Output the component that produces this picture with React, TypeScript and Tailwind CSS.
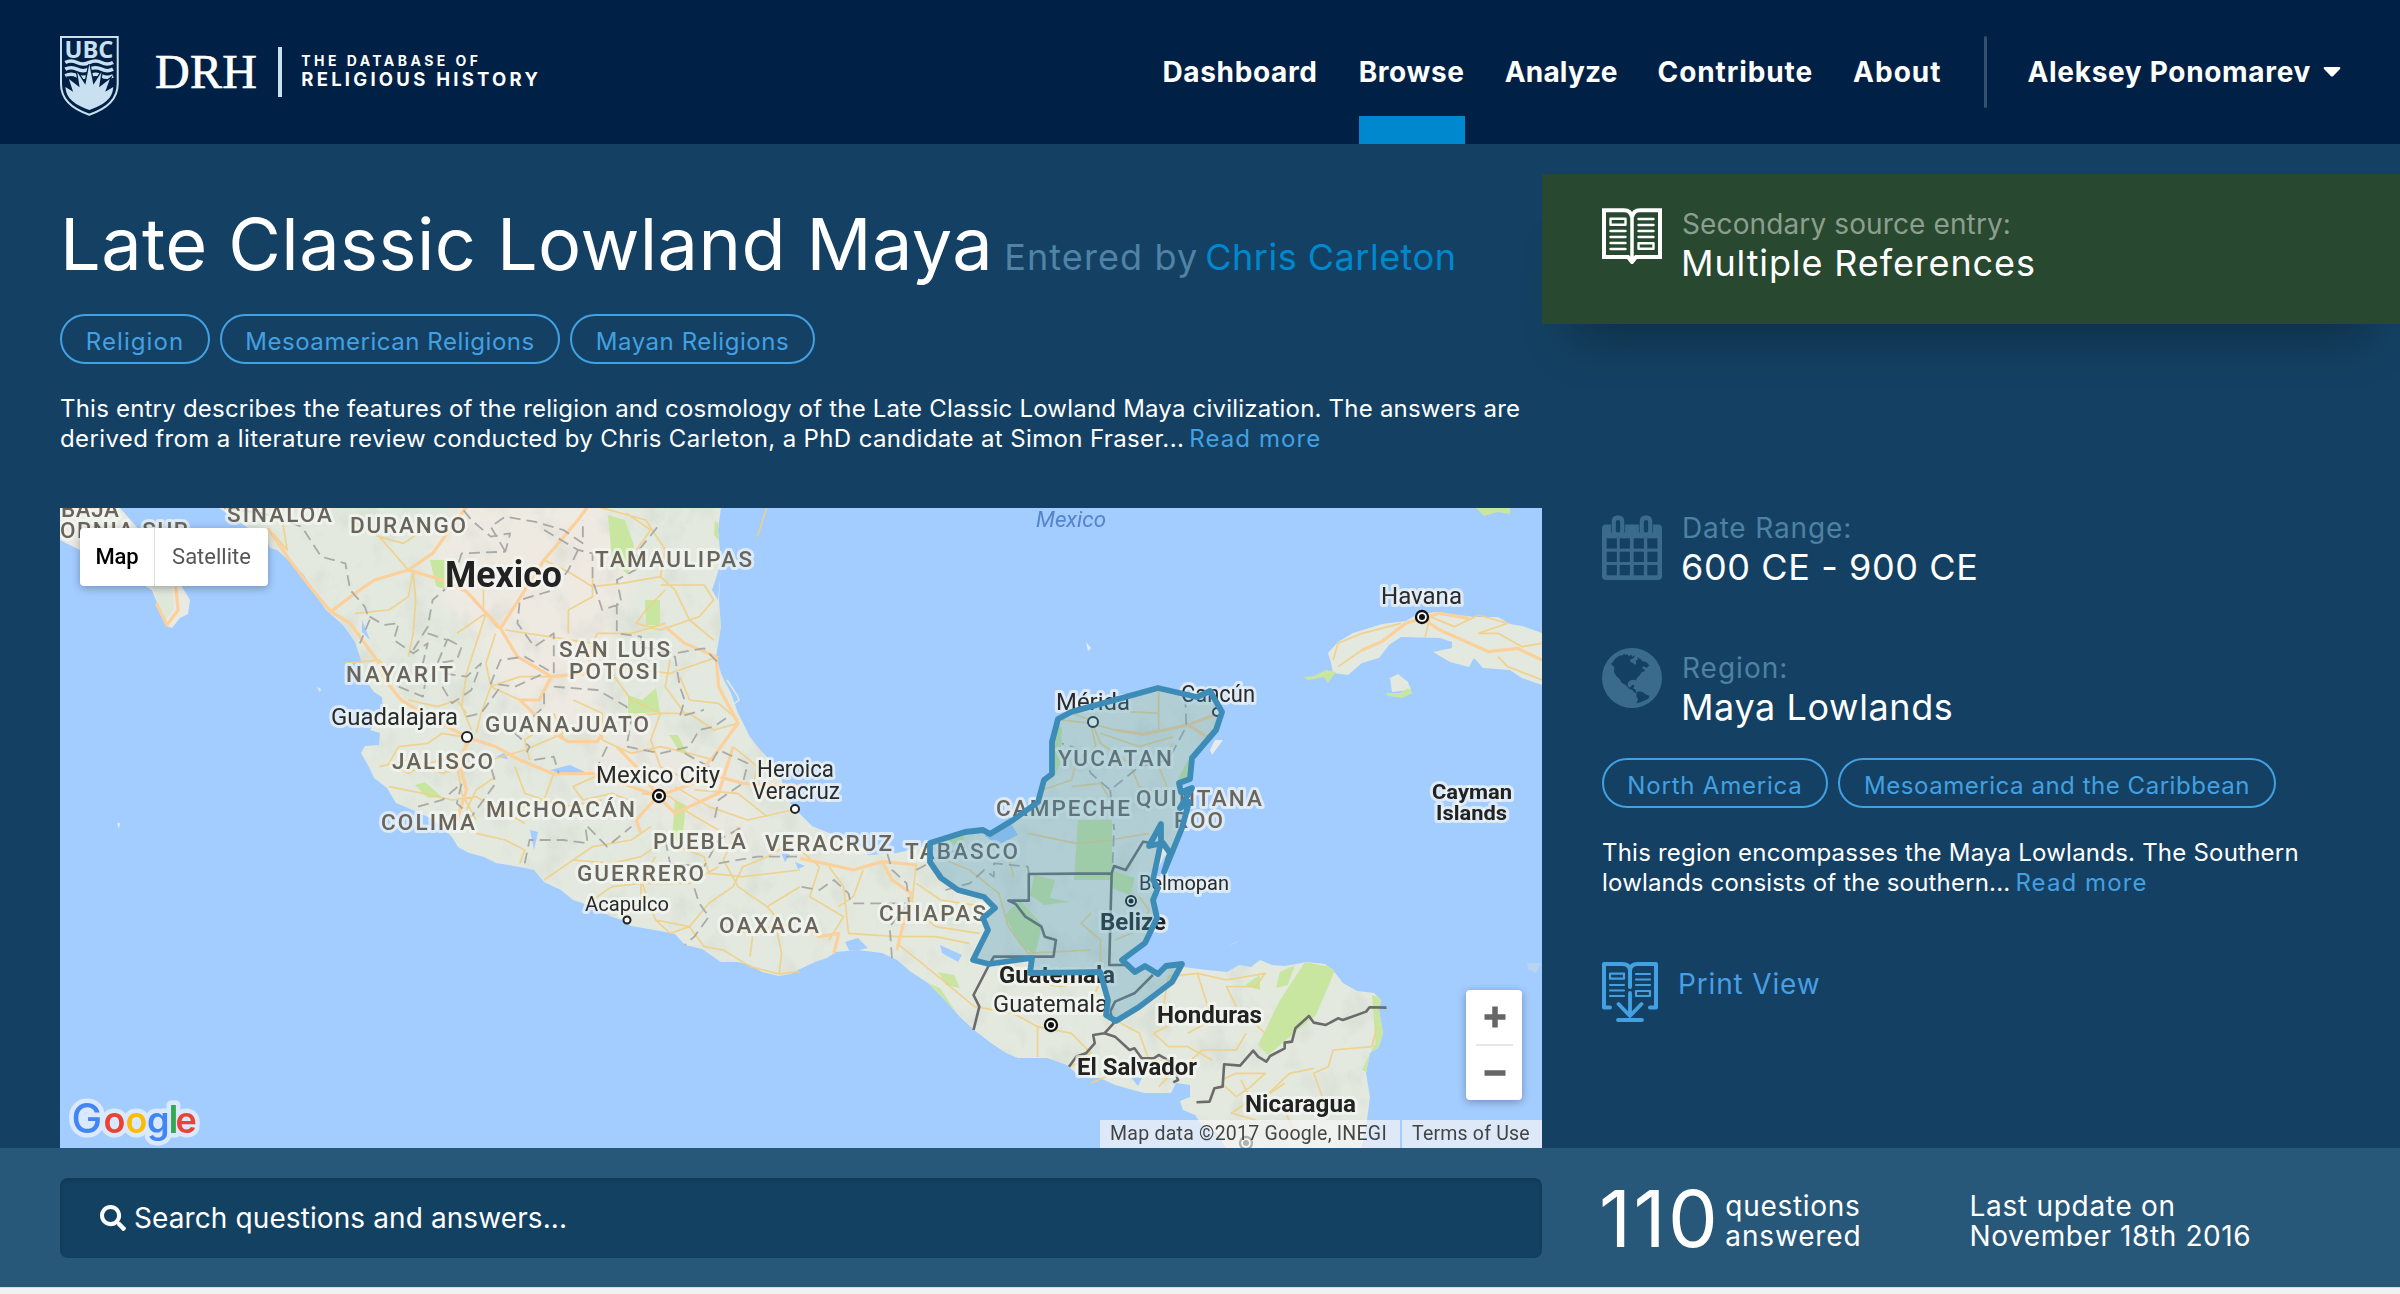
import React from "react";
import { FaSearch } from "react-icons/fa";

function Crest() {
  return (
    <svg className="block h-20 w-[59px]" viewBox="60 36 59 80" fill="none">
      <path d="M61 37H117.7V84C117.7 100 106 109 89.3 114.7C72.5 109 61 100 61 84Z" stroke="#c9e0f1" strokeWidth="2" />
      <text x="64.5" y="57.5" fontFamily="Open Sans" fontWeight="700" fontSize="23" textLength="49" lengthAdjust="spacingAndGlyphs" fill="#c9e0f1">UBC</text>
      <g stroke="#c9e0f1" strokeWidth="3.6">
        <path d="M65.3 62.5Q71 59.5 77 62.5T89.3 62.5T101.5 62.5T113 62.5" />
        <path d="M65.3 69.2Q71 66.2 77 69.2T89.3 69.2T101.5 69.2T113 69.2" />
        <path d="M65.3 75.8Q71 72.8 77 75.8T89.3 75.8T101.5 75.8T113 75.8" />
      </g>
      <g transform="scale(.3827 .3333)" fill="#c9e0f1" stroke="#002145" strokeWidth="7" paintOrder="stroke">
        <path d="M171 261L191 275L180 237L208 262L202 217L223 254L233.500 193L244 254L265 217L259 262L287 237L275 275L296 261C294 290 282 310 233.500 330C186 310 173 290 171 261Z" />
      </g>
    </svg>
  );
}

function BookIcon() {
  return (
    <svg className="block h-14 w-[60px] shrink-0" viewBox="0 0 60 56" fill="none" stroke="#fff">
      <path d="M30 9C29 4 26 2.200 22 2.200H2V49H26L30 54L34 49H58V2.200H38C34 2.200 31 4 30 9Z" strokeWidth="4" />
      <path d="M24 48.500H36L30 56Z" fill="#fff" strokeWidth="0" />
      <path d="M30 6V50" strokeWidth="3.500" />
      <path d="M8.500 10.700H23.500V16.700H8.500ZM36.500 35.300H51.500V40.700H36.500Z" strokeWidth="2.400" strokeLinejoin="round" />
      <path d="M8.500 23H23.500M8.500 29H23.500M8.500 35H23.500M8.500 41H23.500M36.500 11H51.500M36.500 17H51.500M36.500 23H51.500M36.500 29H51.500" strokeWidth="2.400" strokeLinecap="round" />
    </svg>
  );
}

function PrintIcon() {
  return (
    <svg className="block h-[60px] w-14 shrink-0" viewBox="0 0 56 60" fill="none" stroke="#43a0e2" strokeLinecap="round" strokeLinejoin="round">
      <path d="M8 45.500H2V2H20C24.500 2 28 4 28 9V25M28 9C28 4 31.500 2 36 2H54V45.500H48" strokeWidth="4" />
      <path d="M28 31V53M16.500 42L28 54L39.500 42M16 58H40" strokeWidth="3.800" />
      <path d="M8 11.700H22V16.700H8ZM34 29H48V34H34Z" strokeWidth="2.200" />
      <path d="M8 23H22M8 28.500H22M8 34H22M34 12H48M34 17.500H48M34 23H48" strokeWidth="2.200" />
    </svg>
  );
}

function CalendarIcon() {
  const cols = [4.700, 17.700, 31.700, 45.300];
  const rows = [23.300, 36.700, 50];
  return (
    <svg className="block h-[65px] w-[60px] shrink-0" viewBox="0 0 60 65">
      <rect y="9.500" width="60" height="55.500" rx="4" fill="#3a6b8c" />
      <g fill="#3a6b8c" stroke="#144163" strokeWidth=".8">
        <rect x="9.300" y="0" width="13.400" height="22" rx="6" />
        <rect x="37.300" y="0" width="13.400" height="22" rx="6" />
      </g>
      <rect x="6" y="17.500" width="48" height="5" fill="#3a6b8c" />
      <rect x="13.800" y="5" width="4.400" height="12.500" rx="2" fill="#144163" />
      <rect x="41.800" y="5" width="4.400" height="12.500" rx="2" fill="#144163" />
      {rows.map((y) => cols.map((x) => <rect key={`${x}-${y}`} x={x} y={y} width="10.200" height="10.300" fill="#144163" />))}
    </svg>
  );
}

function GlobeIcon() {
  return (
    <svg className="block size-[60px] shrink-0" viewBox="0 0 180 180">
      <circle cx="90" cy="90" r="90" fill="#3a6b8c" />
      <path
        fill="#144163"
        d="M27 48L34 40L41 31L52 23L62 22L66 17L70 21L76 19L80 25L88 20L92 26L99 22L96 30L86 34L84 41L92 44L99 50L103 48L101 38L108 34L106 27L115 33L122 40L133 42L142 52L134 60L126 55L119 60L127 64L128 70L119 73L112 83L104 91L103 98L97 95L86 97L78 103L77 113L83 119L91 111L97 111L94 122L101 125L103 136L96 133L92 127L81 122L70 110L60 105L52 92L42 83L36 72L37 58ZM104 133L112 130L122 132L130 139L143 144L139 152L126 158L116 163L103 166L108 153L103 145Z"
      />
    </svg>
  );
}

const LAND =
  "M219 500L219 508L234 518L248 528L267 540L270 548L277 550L292 563L304 575L311 588L326 610L343 625L355 642L361 660L362 675L374 692L382 697L383 713L370 730L380 733L379 745L365 746L361 753L369 767L374 778L387 788L396 803L408 808L428 817L442 827L452 837L458 847L469 853L484 857L496 863L520 867L534 870L544 882L561 890L573 900L588 905L612 917L622 920L631 926L660 931L675 934L685 945L702 949L721 962L738 962L750 965L762 972L779 976L791 974L800 969L815 962L827 958L836 952L858 950L882 953L897 960L911 972L928 983L945 1000L960 1017L974 1030L991 1043L1006 1053L1018 1058L1047 1058L1067 1065L1079 1076L1100 1078L1115 1085L1144 1093L1171 1093L1176 1083L1190 1085L1190 1097L1180 1101L1183 1110L1195 1115L1202 1125L1217 1133L1227 1150L1361 1150L1367 1120L1370 1097L1366 1073L1370 1053L1379 1047L1383 1033L1379 1010L1381 1000L1374 993L1357 991L1343 983L1333 970L1325 964L1307 962L1285 966L1272 965L1260 960L1251 967L1239 965L1227 972L1207 970L1183 967L1166 965L1159 973L1144 967L1134 970L1122 960L1144 943L1156 917L1153 897L1159 887L1156 873L1164 857L1172 850L1180 833L1188 807L1190 793L1178 783L1190 777L1192 758L1216 730L1222 712L1210 691L1197 698L1158 690L1120 700L1071 714L1058 720L1054 742L1052 775L1042 787L1038 802L1014 822L1000 830L989 835L975 832L965 834L930 845L897 853L868 855L863 848L846 838L829 833L812 826L800 814L790 803L784 787L777 767L767 757L757 746L750 737L738 713L731 693L724 680L721 673L716 657L721 627L719 600L721 560L718 530L722 500Z";

const THIN_NW =
  "M640 60L700 110L750 130L820 60M700 110L760 210M770 215L775 300L770 400L760 470M650 340L720 330L760 290L770 215M880 275L920 340L860 400M920 340L880 520L870 620L890 690M915 240L915 330L945 385M1040 180L1090 215L1140 260L1200 250L1280 230M1090 400L1090 330L1140 290L1140 230M1150 20L1250 60L1290 150L1280 230L1310 270L1340 360L1390 420M1280 255L1370 255L1390 300L1360 350L1280 390L1230 370L1250 330L1290 270M1230 150L1260 90L1210 40M940 400L920 490L930 560L990 600M960 390L1050 410L1140 430L1150 400L1220 400L1290 370M1140 430L1170 500L1220 600L1280 640L1340 640L1390 690L1440 670M1060 530L990 530L930 560L910 640L900 700M1180 500L1300 520L1400 470M1320 530L1340 600L1400 610L1440 660M1300 480L1290 560L1330 640M760 600L820 620L860 600L880 640M740 740L800 730L830 700L870 710M740 740L720 790L760 820L800 790L860 770M890 715L860 790L870 880L900 960M930 780L1000 750L1080 700L1060 640M980 800L1000 880L1080 920L1160 900M1060 820L1040 900L980 930M1160 720L1160 640L1100 600M1160 720L1220 760L1280 740L1340 760L1390 780M1210 650L1280 640L1260 720L1280 800L1350 850M1310 860L1380 920L1460 960L1550 930M1350 870L1440 880L1500 950M1430 740L1480 800L1470 860L1520 900M720 860L790 880L850 900L900 890L1000 970M940 830L900 870L880 930M1080 710L1040 680L1000 720L1010 780M1480 110L1500 20M480 100L510 150L500 60M630 490L700 480L720 520M700 800L760 780L830 820L880 800M1160 820L1100 860L1120 900L1180 880L1230 910M1240 880L1300 890L1340 940L1400 990";
const THICK_NW =
  "M470 85L520 190L560 265L600 335L640 370L670 430L700 490L715 545L745 600L800 650L880 710L940 740L990 780L1060 822L1140 820L1200 850L1275 888L1350 850L1400 830L1450 850L1568 860M600 335L650 280L690 240L760 210L810 160L850 80L880 20M760 210L830 240L880 275L950 385L985 470L1055 530L1030 600L990 600L1060 700L1090 725L1150 725L1160 700M950 385L1040 180L1110 60L1130 20M1055 530L1130 520L1140 430M1190 740L1230 800L1275 888M1275 888L1310 940L1400 880L1430 740M1395 470L1400 560L1440 670L1390 770L1350 830M1395 470L1330 430L1290 380M1275 888L1230 960L1240 1000M860 960L880 870L865 790L885 710M280 260L285 330L262 375L240 310";
const THIN_SW =
  "M900 40L960 60L1000 90L990 130M1040 180L1100 120L1140 80L1220 60L1260 20M1100 120L1180 130L1240 110L1290 60M1130 250L1180 200L1240 190L1340 190L1400 140M1240 190L1240 250L1200 280M1270 110L1240 180L1270 300L1340 320L1380 250L1430 200L1450 140L1500 110L1560 60M1440 20L1410 120L1440 200L1500 260L1530 310L1470 340L1420 330M1500 260L1568 200M1530 310L1568 340M1470 350L1465 410M1520 330L1530 400L1525 460M1340 320L1370 380L1410 390L1465 440L1525 462L1568 455M1270 300L1300 340L1340 320M1320 80L1370 110L1380 160L1450 170L1568 150";
const THIN_SE =
  "M0 90L40 140L20 230L90 290L60 360M90 200L100 340L200 350L280 350L350 370M90 200L60 140M130 150L110 230L80 260M240 130L230 260L280 320L370 340M240 190L290 240L380 260M200 370L260 440L310 500L360 560M400 420L440 480L540 500L600 470M360 560L440 580L490 620L490 710M490 620L560 640L600 700L560 740M300 120L350 150L410 220L430 320L470 400L600 390M430 100L440 170M470 40L570 70L640 60L720 40M600 280L580 310L620 360L620 440M650 360L700 330L720 270L700 230M640 590L600 550L620 480M650 600L700 640L720 720L800 730L830 690L900 690L920 640M760 470L750 560L770 610L730 640L760 680L800 680L850 720M760 470L820 460L880 480L960 460L940 500L880 500L900 560L960 640M820 460L850 600L800 640M870 780L900 760L960 760L930 800L900 830L870 790M910 780L930 840L890 880L940 900M930 840L1000 870L1080 840L1060 760L1090 740L1100 690L1180 680M1000 870L1020 940M600 790L680 740L760 770L740 800M1000 790L960 830L1010 760L1060 745M1180 680L1190 620";
const THICK_SE =
  "M0 115L50 130L110 150L170 125L240 135M170 125L190 180L230 220L210 330L200 390M70 400L80 340L40 350L20 330";
const THIN_NE =
  "M1100 480L1110 430L1160 400L1240 370M1290 410L1300 350L1350 380L1400 345L1460 370L1400 400L1440 400L1490 440L1531 430M1440 470L1460 500L1531 540M1110 500L1160 450M540 660L600 670L650 690M560 640L600 660L620 730L680 790L700 860L740 880M600 670L610 740L570 790L560 840L500 870L490 940M740 570L740 690L710 700M620 630L740 640M620 700L700 740L770 710M770 730L740 800L760 870L740 910M560 860L620 850L640 900";
const THICK_NE = "M1160 450L1200 425L1250 370L1283 355L1320 390L1420 455L1480 445L1531 480M1283 355L1320 340L1380 355M650 690L710 703L800 675L855 645M800 675L840 710";
const DASH_NW =
  "M380 24L460 40L540 80L580 170L630 190L640 270L670 320L680 360L660 430M680 350L710 375L740 370L730 420L770 460L800 430L790 490M800 400L840 420L820 490L860 480L870 440L830 410M770 450L800 380L810 300L850 250L870 160L960 155L970 100L930 110L890 60L870 24M960 155L930 80L960 50L1020 65L1080 90L1120 130L1120 60M1040 90L1110 150L1140 160L1140 240L1160 330L1200 310L1190 240L1240 200L1230 160L1280 70M1110 150L1090 210L1060 270L990 300L985 370L1020 440L1060 400L1060 520L1000 470L950 480L930 550L980 560L1040 520M1190 310L1190 400L1240 410L1240 440L1310 460L1370 445L1400 490M1240 440L1310 470L1320 560L1330 600L1320 650L1370 630M1060 560L1150 570L1210 620L1220 660L1210 740L1280 760L1340 740L1360 690L1390 680L1420 650M830 560L850 610L890 570L910 490L880 530L830 520M880 650L910 640L950 560M1040 580L1040 620L980 700L1010 740L1000 770M1020 780L1060 770L1070 820M740 560L790 590L800 500M1330 760L1380 800L1400 750L1460 790L1450 850L1400 900L1390 970M1170 740L1150 800M780 920L830 900L870 850L860 910L890 950L940 850L930 800";
const DASH_SW =
  "M1000 130L1010 60L1080 60L1130 70L1125 20M1130 20L1170 80L1220 20M1290 60L1300 130L1370 140L1400 60L1450 20M1400 130L1480 110L1568 110M1350 205L1360 250L1380 290L1350 350L1330 375";
const DASH_SE =
  "M180 100L190 150L220 190L225 250L105 250L100 220L70 180L40 210L0 200M225 250L185 320L190 420M300 210L350 190L380 150L400 170L400 130L470 140L472 160M240 150L290 110L340 80M645 130L648 20";
const DASH_NE = "M795 590L797 680L760 780L700 800L640 870L600 820L580 750L540 730M640 870L648 990";
const BORDERS_SE =
  "M358 630L370 560L358 525L390 435L400 410L523 410L528 360L505 350L498 320L465 290L445 252L430 242L472 242L472 162L643 160L648 138L672 150L708 65L722 68M643 160L638 435L670 435M728 465L690 520L650 545L640 575L647 610L628 640L605 645L608 670L590 700L570 710L555 740M628 640L650 650L680 690L690 685L705 715L730 715L740 705L765 725L780 780L770 787M818 847L845 845L855 805L872 800L875 733L908 737L935 692L945 710L962 725L970 708L1000 685L1000 668L1015 665L1022 625L1050 588L1060 608L1085 615L1110 595L1120 600L1168 575L1175 562L1210 563";
const REGION =
  "M1158 688L1197 697L1210 691L1222 712L1216 730L1192 758L1190 779L1179 783L1181 792L1192 788L1180 808L1189 802L1182 828L1164 872L1170 853L1163 843L1149 846L1161 824L1161 842L1153 880L1158 888L1153 900L1157 918L1145 943L1122 960L1135 972L1145 966L1158 974L1166 966L1182 964L1172 982L1139 1007L1116 1021L1106 1015L1108 1000L1100 972L1030 973L1032 958L989 964L973 960L988 930L983 918L995 908L984 897L958 890L941 878L930 862L930 843L965 832L983 830L990 834L1013 820L1038 802L1044 780L1052 774L1052 742L1058 719L1071 712Z";

type MapLabel = { t: string; x: number; y: number; w: number; kind: "state" | "city" | "country"; s?: number };
const LABELS: MapLabel[] = [
  { t: "BAJA", x: 61, y: 517, w: 58, kind: "state" },
  { t: "ORNIA SUR", x: 60, y: 538, w: 128, kind: "state" },
  { t: "SINALOA", x: 227, y: 522, w: 105, kind: "state" },
  { t: "DURANGO", x: 350, y: 533, w: 116, kind: "state" },
  { t: "TAMAULIPAS", x: 595, y: 567, w: 157, kind: "state" },
  { t: "SAN LUIS", x: 559, y: 657, w: 111, kind: "state" },
  { t: "POTOSI", x: 569, y: 679, w: 89, kind: "state" },
  { t: "NAYARIT", x: 346, y: 682, w: 107, kind: "state" },
  { t: "GUANAJUATO", x: 485, y: 732, w: 164, kind: "state" },
  { t: "JALISCO", x: 392, y: 769, w: 101, kind: "state" },
  { t: "MICHOACÁN", x: 486, y: 817, w: 149, kind: "state" },
  { t: "COLIMA", x: 381, y: 830, w: 94, kind: "state" },
  { t: "PUEBLA", x: 653, y: 849, w: 93, kind: "state" },
  { t: "VERACRUZ", x: 765, y: 851, w: 127, kind: "state" },
  { t: "GUERRERO", x: 577, y: 881, w: 127, kind: "state" },
  { t: "OAXACA", x: 719, y: 933, w: 100, kind: "state" },
  { t: "CHIAPAS", x: 879, y: 921, w: 107, kind: "state" },
  { t: "TABASCO", x: 905, y: 859, w: 113, kind: "state" },
  { t: "YUCATAN", x: 1058, y: 766, w: 114, kind: "state" },
  { t: "CAMPECHE", x: 996, y: 816, w: 134, kind: "state" },
  { t: "QUINTANA", x: 1136, y: 806, w: 126, kind: "state" },
  { t: "ROO", x: 1174, y: 828, w: 49, kind: "state" },
  { t: "Guadalajara", x: 331, y: 725, w: 127, kind: "city" },
  { t: "Mexico City", x: 596, y: 783, w: 124, kind: "city" },
  { t: "Heroica", x: 757, y: 777, w: 77, kind: "city" },
  { t: "Veracruz", x: 752, y: 799, w: 88, kind: "city" },
  { t: "Acapulco", x: 585, y: 911, w: 84, kind: "city", s: 20 },
  { t: "Mérida", x: 1056, y: 710, w: 74, kind: "city" },
  { t: "Cancún", x: 1181, y: 702, w: 74, kind: "city" },
  { t: "Havana", x: 1381, y: 604, w: 81, kind: "city" },
  { t: "Belmopan", x: 1139, y: 890, w: 90, kind: "city", s: 20 },
  { t: "Guatemala", x: 993, y: 1012, w: 115, kind: "city" },
  { t: "Mexico", x: 445, y: 587, w: 117, kind: "country", s: 36 },
  { t: "Guatemala", x: 999, y: 983, w: 116, kind: "country" },
  { t: "Belize", x: 1100, y: 930, w: 66, kind: "country" },
  { t: "Honduras", x: 1157, y: 1023, w: 105, kind: "country" },
  { t: "El Salvador", x: 1077, y: 1075, w: 120, kind: "country" },
  { t: "Nicaragua", x: 1245, y: 1112, w: 111, kind: "country" },
  { t: "Cayman", x: 1432, y: 799, w: 80, kind: "country", s: 21 },
  { t: "Islands", x: 1436, y: 820, w: 71, kind: "country", s: 21 },
];

const labelStyle = {
  state: { fill: "#6a655b", weight: 500, size: 22.5 },
  city: { fill: "#2a2a2a", weight: 400, size: 23 },
  country: { fill: "#222", weight: 700, size: 23 },
};

function Capital({ x, y, r = 6 }: { x: number; y: number; r?: number }) {
  return (
    <>
      <circle cx={x} cy={y} r={r} fill="#fff" stroke="#111" strokeWidth={r / 2.6} />
      <circle cx={x} cy={y} r={r / 2} fill="#111" />
    </>
  );
}

const NW = "translate(40 500) scale(.4847 .3333)";
const SW = "translate(40 820) scale(.4847 .3333)";
const NE = "translate(800 500) scale(.4847 .3333)";
const SE = "translate(800 820) scale(.4847 .3333)";

function Lines({ d, at }: { d: string; at: string }) {
  return <path d={d} transform={at} vectorEffect="non-scaling-stroke" />;
}

function MapDrawing() {
  return (
    <svg className="block size-full" viewBox="60 508 1482 640" fill="none">
      <defs>
        <clipPath id="land">
          <path d={LAND} />
        </clipPath>
        <filter id="relief" x="0" y="0" width="1" height="1">
          <feTurbulence type="fractalNoise" baseFrequency=".035 .028" numOctaves="4" seed="7" />
          <feColorMatrix values="0 0 0 0 .62  0 0 0 0 .66  0 0 0 0 .58  0 2.600 0 0 -1.350" />
        </filter>
        <filter id="soft" x="-.2" y="-.2" width="1.400" height="1.400">
          <feGaussianBlur stdDeviation="9" />
        </filter>
      </defs>
      <rect x="60" y="508" width="1482" height="640" fill="#a3ccff" />
      <path d={LAND} fill="#e3e9df" />
      <g clipPath="url(#land)">
        <g fill="#eeeae2" filter="url(#soft)">
          <path d="M470 500H600L640 560L610 640L590 720L550 740L500 690L480 640L440 600L430 540Z" />
          <path d="M590 700L680 740L740 780L760 850L720 860L640 800L590 780Z" opacity=".6" />
        </g>
        <rect x="219" y="500" width="1200" height="650" filter="url(#relief)" opacity=".5" />
        <g fill="#c9e6a0">
          <path d="M608 515L625 520L634 545L628 575L612 560Z" />
          <path d="M430 560H446V590L436 586Z" />
          <path d="M645 600H660V625H646Z" />
          <path d="M628 695L642 700L656 688L660 712L628 714Z" />
          <path d="M669 735L678 735L688 755L680 752Z" />
          <path d="M415 785L425 782L442 797L428 798Z" />
          <path d="M715 520L723 530V545L714 535Z" />
          <path d="M675 800L686 805L682 842L672 838Z" />
          <path d="M1078 820H1112V880H1074Z" />
          <path d="M1034 875L1055 880L1050 898L1070 902L1044 905L1030 895Z" />
          <path d="M1005 915L1020 900L1042 925L1035 955L1020 945Z" />
          <path d="M1110 870L1135 878L1130 895L1112 888Z" />
          <path d="M1188 760H1194V785L1176 783Z" />
          <path d="M1052 718L1062 728L1060 765L1052 780Z" />
          <path d="M1305 962L1336 968L1316 1015L1268 1055L1258 1045L1280 1000Z" />
          <path d="M1280 972L1295 965L1288 985L1276 988Z" />
          <path d="M1245 985L1260 975L1260 990Z" />
          <path d="M1374 1045H1382L1372 1075L1362 1070ZM1372 995L1388 1000V1050H1376Z" />
          <path d="M920 980L940 988L960 1018L945 1005Z" />
          <path d="M938 972L954 975L960 988L946 985Z" />
          <path d="M948 840L965 832L962 850Z" />
        </g>
        <g fill="#a3ccff">
          <path d="M550 770L570 765L585 772L560 774Z" />
          <path d="M530 830L538 832L534 850Z" />
          <path d="M780 850L790 855L785 862ZM795 862L805 866L798 869Z" />
          <path d="M1130 1076L1142 1078L1138 1086ZM988 826L1010 822L1018 835L998 845L985 836Z" />
          <path d="M845 942L858 938L868 948L850 952ZM940 945L962 955L958 962L942 953Z" />
          <path d="M722 560L712 590L718 600ZM362 620L370 640L362 632Z" />
          <path d="M496 757L504 753L508 759Z" />
        </g>
      </g>

      <path d="M60 508H120L135 525L150 545L165 575L182 587L190 600L188 614L180 618L172 628L166 626L160 610L152 590L135 580L110 565L80 550L60 540Z" fill="#ebeae2" />
      <path d="M152 585L172 583L174 610L164 622Z" fill="#dfe6da" />
      <path d="M1331 663L1328 653L1338 642L1353 633L1382 624L1406 621L1416 615L1435 612L1459 615L1474 617L1498 617L1510 624L1522 626L1542 633V685L1522 678L1510 670L1483 668L1474 658L1469 667L1450 662L1433 652L1452 648L1452 642L1440 638L1401 637L1389 645L1379 658L1362 663L1348 675L1333 673Z" fill="#e3e9df" />
      <path d="M1304 677L1314 676L1326 670L1336 672L1328 683L1324 677L1308 680Z" fill="#c9e6a0" />
      <path d="M1390 678L1398 674L1408 682L1411 690L1392 692Z" fill="#e3e9df" />
      <path d="M1386 693L1400 693L1408 688L1413 693L1402 698L1388 696Z" fill="#c9e6a0" />
      <path d="M1476 508H1510V514L1498 512L1484 516Z" fill="#c9e6a0" />
      <path d="M1210 750L1215 740L1223 740L1212 755ZM1086 642L1091 648L1088 651ZM1229 946L1241 940L1234 943ZM317 687L321 689L320 692ZM117 823L119 829L120 823Z" fill="#e6ecea" />
      <path d="M1527 963H1541L1536 973L1528 969Z" fill="#b9d3f2" />
      <path d="M727 680L737 695L739 700L734 704" stroke="#e3e9df" strokeWidth="1.500" />

      <g stroke="#f0cf86" strokeWidth="1.700" strokeLinejoin="round" strokeOpacity=".9">
        <Lines d={THIN_SW} at={SW} />
        <Lines d={THIN_SE} at={SE} />
        <Lines d={THIN_NE} at={NE} />
        <Lines d={THIN_NW} at={NW} />
      </g>
      <g stroke="#fbd09a" strokeWidth="3.200" strokeLinejoin="round">
        <Lines d={THICK_NW} at={NW} />
        <Lines d={THICK_SE} at={SE} />
        <Lines d={THICK_NE} at={NE} />
      </g>
      <g stroke="#a9aaa8" strokeWidth="1.800" strokeDasharray="11 6" strokeLinejoin="round">
        <Lines d={DASH_NW} at={NW} />
        <Lines d={DASH_SW} at={SW} />
        <Lines d={DASH_SE} at={SE} />
        <Lines d={DASH_NE} at={NE} />
      </g>
      <g stroke="#6b6b6b" strokeWidth="2.600" strokeLinejoin="round">
        <Lines d={BORDERS_SE} at={SE} />
      </g>

      <text x="1036" y="527" fontFamily="Roboto" fontStyle="italic" fontSize="22" textLength="70" lengthAdjust="spacingAndGlyphs" fill="#5584cc">Mexico</text>
      {LABELS.map((l) => {
        const st = labelStyle[l.kind];
        return (
          <text
            key={`${l.t}${l.x}`}
            x={l.x}
            y={l.y}
            fontFamily="Roboto"
            fontWeight={st.weight}
            fontSize={l.s ?? st.size}
            textLength={l.w}
            lengthAdjust={l.kind === "state" ? "spacing" : "spacingAndGlyphs"}
            fill={st.fill}
            stroke="#f4f6f3"
            strokeOpacity=".7"
            strokeWidth="6"
            strokeLinejoin="round"
            paintOrder="stroke"
          >
            {l.t}
          </text>
        );
      })}
      <g fill="#fff" stroke="#222" strokeWidth="2">
        <circle cx="467" cy="737" r="5" />
        <circle cx="795" cy="809" r="4" />
        <circle cx="627" cy="920" r="3.500" />
        <circle cx="1093" cy="722" r="5" />
        <circle cx="1217" cy="712" r="4" />
      </g>
      <Capital x={659} y={796} />
      <Capital x={1422} y={617} />
      <Capital x={1051} y={1025} />
      <Capital x={1131} y={901} r={5} />
      <Capital x={1246} y={1143} />

      <path d={REGION} fill="#4495bb" fillOpacity=".32" stroke="#3d8cb7" strokeWidth="5.800" strokeLinejoin="round" />

      <g fontFamily="Inter" fontWeight="600" fontSize="36">
        <text y="1132.500" fill="#dbe9ff" stroke="#dbe9ff" strokeWidth="9" strokeLinejoin="round">
          <tspan x="71.500" fontSize="41">G</tspan>
          <tspan x="103.500">o</tspan>
          <tspan x="125.500">o</tspan>
          <tspan x="147">g</tspan>
          <tspan x="168.500" fontSize="38">l</tspan>
          <tspan x="175.500">e</tspan>
        </text>
        <text y="1132.500">
          <tspan x="71.500" fontSize="41" fontWeight="500" fill="#4285f4">G</tspan>
          <tspan x="103.500" fill="#ea4335">o</tspan>
          <tspan x="125.500" fill="#fbbc05">o</tspan>
          <tspan x="147" fill="#4285f4">g</tspan>
          <tspan x="168.500" fontSize="38" fill="#34a853">l</tspan>
          <tspan x="175.500" fill="#ea4335">e</tspan>
        </text>
      </g>
    </svg>
  );
}

function Tag({ className, children }: { className: string; children: React.ReactNode }) {
  return (
    <a className={`flex h-[50px] items-center justify-center whitespace-nowrap rounded-[25px] border-2 border-[#43a0e2] pt-[5px] text-[24px] leading-[30px] text-[#43a0e2] ${className}`}>
      {children}
    </a>
  );
}

function Fact({ icon, label, value }: { icon: React.ReactNode; label: React.ReactNode; value: React.ReactNode }) {
  return (
    <div className="flex items-start gap-5 whitespace-nowrap">
      {icon}
      <div>
        <div className="text-[28px] leading-9">{label}</div>
        <div className="-ml-px text-[36px] leading-[42px] text-white">{value}</div>
      </div>
    </div>
  );
}

function Header() {
  return (
    <header className="flex h-36 items-center justify-between bg-[#002145] pl-[60px] pr-[59px] text-white">
      <div className="flex items-center">
        <div className="mt-2">
          <Crest />
        </div>
        <div className="ml-9 font-['Liberation_Serif'] text-[48px] leading-[50px] tracking-[0.3px] [-webkit-text-stroke:0.7px_white]">DRH</div>
        <div className="ml-[21px] h-[50px] w-1 bg-[#c9e0f1]" />
        <div className="ml-[19px] whitespace-nowrap font-bold">
          <div className="text-[14px] leading-[14px] tracking-[3.45px]">THE DATABASE OF</div>
          <div className="text-[18.5px] leading-[22px] tracking-[3.25px]">RELIGIOUS HISTORY</div>
        </div>
      </div>
      <nav className="flex h-36 items-center whitespace-nowrap text-[28px] font-bold leading-9">
        <a className="mr-[41px] tracking-[0.65px]">Dashboard</a>
        <a className="relative mr-10 flex h-36 w-[106px] items-center tracking-[0.6px]">
          Browse
          <span className="absolute bottom-0 left-0 h-7 w-[106px] bg-[#0088ce]" />
        </a>
        <a className="mr-10 tracking-[0.2px]">Analyze</a>
        <a className="mr-10 tracking-[0.9px]">Contribute</a>
        <a className="tracking-[1px]">About</a>
        <span className="ml-[42px] h-[72px] w-[3px] rounded bg-[#33506f]" />
        <a className="ml-[41px] tracking-[0.68px]">Aleksey Ponomarev</a>
        <svg className="ml-3 h-2.5 w-[18px]" viewBox="0 0 18 10" fill="#fff">
          <path d="M1.500 0H16.500Q18 .5 17 2L10 9.200Q9 10 8 9.200L1 2Q0 .5 1.500 0Z" />
        </svg>
      </nav>
    </header>
  );
}

function EntryMap() {
  return (
    <div className="relative h-[640px] w-[1482px] overflow-hidden font-['Roboto']">
      <MapDrawing />
      <div className="absolute left-5 top-5 flex h-[58px] w-[188px] items-center rounded bg-white text-[22px] leading-none shadow-[0_2px_8px_rgba(0,0,0,0.3)]">
        <span className="flex h-full w-[75px] items-center justify-center border-r border-[#ddd] text-[22px] font-medium tracking-[-0.2px] text-black">Map</span>
        <span className="flex-1 text-center text-[22px] text-[#565656]">Satellite</span>
      </div>
      <div className="absolute bottom-12 right-5 flex h-[110px] w-14 flex-col items-center rounded bg-white shadow-[0_2px_8px_rgba(0,0,0,0.3)]">
        <svg className="h-[54px] w-14" viewBox="0 0 56 54" stroke="#666" strokeWidth="5.500">
          <path d="M18.500 27H39.500M29 16.500V37.500" />
        </svg>
        <div className="h-0.5 w-[37px] bg-[#e6e6e6]" />
        <svg className="h-[54px] w-14" viewBox="0 0 56 54" stroke="#666" strokeWidth="5.500">
          <path d="M18.500 27H39.500" />
        </svg>
      </div>
      <div className="absolute bottom-0 right-0 flex h-7 w-[442px] gap-0.5 whitespace-nowrap text-[19.5px] leading-7 text-[#444]">
        <span className="w-[300px] bg-[#f5f5f5]/70 pl-2.5 tracking-[0.25px]">Map data ©2017 Google, INEGI</span>
        <span className="flex-1 bg-[#f5f5f5]/70 pl-2.5 tracking-[0.2px]">Terms of Use</span>
      </div>
    </div>
  );
}

export default function App() {
  return (
    <div className="flex h-[1294px] w-[2400px] flex-col overflow-hidden bg-[#f1f1f1] font-['Inter',sans-serif]">
      <Header />
      <main className="flex h-[1004px] bg-[#144163] text-white">
        <section className="w-[1542px] pl-[60px] pt-[58px]">
          <h1 className="flex items-baseline whitespace-nowrap text-[72px] leading-[84px] tracking-[0.42px]">
            Late Classic Lowland Maya
            <span className="ml-[11px] text-[36px] leading-10 tracking-[1.1px] text-[#5083a5]">Entered by</span>
            <span className="ml-[7px] text-[36px] leading-10 tracking-[0.5px] text-[#0088ce]">Chris Carleton</span>
          </h1>
          <div className="mt-7 flex gap-2.5">
            <Tag className="w-[150px] tracking-[1.1px]">Religion</Tag>
            <Tag className="w-[340px] tracking-[0.55px]">Mesoamerican Religions</Tag>
            <Tag className="w-[245px] tracking-[0.57px]">Mayan Religions</Tag>
          </div>
          <p className="mt-[30px] whitespace-nowrap text-[24px] leading-[30px]">
            <span className="tracking-[0.21px]">
              This entry describes the features of the religion and cosmology of the Late Classic Lowland Maya civilization. The answers are
            </span>
            <br />
            <span className="tracking-[0.37px]">derived from a literature review conducted by Chris Carleton, a PhD candidate at Simon Fraser...</span>
            <a className="ml-[5px] tracking-[1.1px] text-[#43a0e2]">Read more</a>
          </p>
          <div className="mt-[54px]">
            <EntryMap />
          </div>
        </section>

        <aside className="w-[858px] pt-[30px]">
          <div className="h-[150px] bg-[#284930] pl-[60px] pt-8 text-[#8c9f8e] shadow-[0_44px_50px_-30px_rgba(0,0,0,0.3)]">
            <Fact
              icon={<div className="pt-0.5"><BookIcon /></div>}
              label={<span className="tracking-[0.12px]">Secondary source entry:</span>}
              value={<span className="tracking-[0.88px]">Multiple References</span>}
            />
          </div>
          <div className="pl-[60px] text-[#4f81a3]">
            <div className="pt-[186px]">
              <Fact
                icon={<div className="pt-[5px]"><CalendarIcon /></div>}
                label={<span className="tracking-[0.85px]">Date Range:</span>}
                value={<span className="tracking-[0.6px]">600 CE - 900 CE</span>}
              />
            </div>
            <div className="pt-[62px]">
              <Fact
                icon={<div className="-mt-0.5"><GlobeIcon /></div>}
                label={<span className="tracking-[1px]">Region:</span>}
                value={<span className="tracking-[0.6px]">Maya Lowlands</span>}
              />
            </div>
            <div className="mt-[30px] flex gap-2.5">
              <Tag className="w-[226px] tracking-[0.8px]">North America</Tag>
              <Tag className="w-[438px] tracking-[0.54px]">Mesoamerica and the Caribbean</Tag>
            </div>
            <p className="mt-[30px] whitespace-nowrap text-[24px] leading-[30px] text-white">
              <span className="tracking-[0.22px]">This region encompasses the Maya Lowlands. The Southern</span>
              <br />
              <span className="tracking-[0.18px]">lowlands consists of the southern...</span>
              <a className="ml-[5px] tracking-[1.1px] text-[#43a0e2]">Read more</a>
            </p>
            <div className="mt-16 flex items-start gap-5">
              <PrintIcon />
              <a className="pt-1 text-[28px] leading-9 tracking-[0.85px] text-[#479fe6]">Print View</a>
            </div>
          </div>
        </aside>
      </main>

      <section className="flex h-[140px] items-center whitespace-nowrap border-b border-[#d3dae0] bg-[#285879] pl-[60px] text-[28px] text-white">
        <div className="flex h-20 w-[1482px] items-center rounded-lg bg-[#134162] pl-10 shadow-[inset_0_2px_4px_rgba(0,0,0,0.15)]">
          <FaSearch className="size-[26px]" />
          <span className="ml-2 leading-9 tracking-[0.1px]">Search questions and answers...</span>
        </div>
        <div className="ml-[57px] text-[79px] leading-[80px] tracking-[2.4px]">110</div>
        <div className="ml-[5px] mt-1.5 leading-[30px]">
          <div className="tracking-[0.7px]">questions</div>
          <div className="tracking-[0.85px]">answered</div>
        </div>
        <div className="ml-[108px] mt-1.5 leading-[30px]">
          <div className="tracking-[0.72px]">Last update on</div>
          <div className="tracking-[0.6px]">November 18th 2016</div>
        </div>
      </section>
    </div>
  );
}
